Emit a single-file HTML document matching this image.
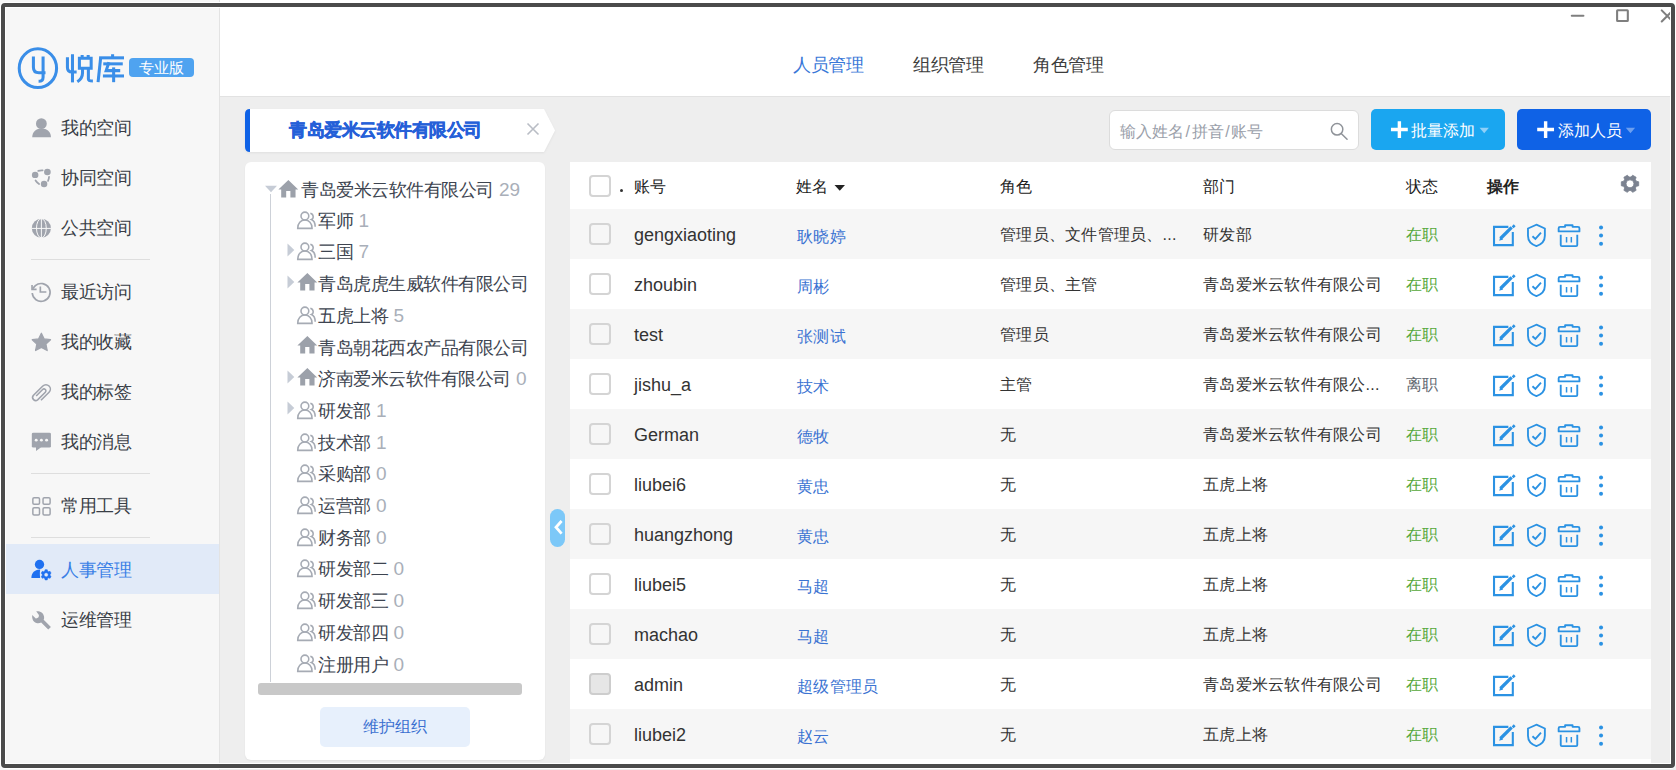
<!DOCTYPE html>
<html><head><meta charset="utf-8">
<style>
*{box-sizing:border-box;margin:0;padding:0}
html,body{width:1676px;height:770px;overflow:hidden;background:#f4f4f4;font-family:"Liberation Sans",sans-serif;}
.a{position:absolute;white-space:nowrap}
#side{position:absolute;left:0;top:0;width:220px;height:770px;background:#f7f7f7;border-right:1px solid #e3e3e3}
#head{position:absolute;left:220px;top:0;width:1456px;height:97px;background:#fff;border-bottom:1px solid #e2e2e2}
#main{position:absolute;left:220px;top:97px;width:1456px;height:673px;background:#eeeeee}
.nav{position:absolute;left:61px;font-size:18px;letter-spacing:-0.4px;color:#393e46;line-height:24px;white-space:nowrap}
.dv{position:absolute;left:31px;width:119px;height:1px;background:#dedede}
.ic{position:absolute;left:26px;width:32px;height:32px}
.tab{position:absolute;top:53px;font-size:18px;letter-spacing:-0.5px;line-height:24px;color:#3d3d3d;white-space:nowrap}
</style></head><body>
<div id="side"></div>
<div id="head"></div>
<div id="main"></div>

<!-- logo -->
<svg class="a" style="left:14px;top:44px" width="116" height="48" viewBox="0 0 1676 694" fill="none" stroke="#3a8ee8" stroke-width="44" stroke-linecap="butt">
<ellipse cx="345" cy="350" rx="270" ry="280"/>
<path d="M280,180 V335 Q280,415 360,415 H455"/>
<path d="M420,180 V480 Q420,540 355,540"/>
<path d="M845,148 V555"/>
<path d="M772,190 V340 Q772,405 840,405 H905"/>
<path d="M985,158 V205 M1072,158 V205"/>
<path d="M945,205 H1115 V350 H945 Z"/>
<path d="M990,350 V420 Q990,500 915,545"/>
<path d="M1075,350 V505 Q1075,535 1140,535"/>
<path d="M1425,148 V200"/>
<path d="M1230,200 H1590"/>
<path d="M1252,200 L1215,552"/>
<path d="M1290,287 H1572"/>
<path d="M1372,265 L1332,385 H1535"/>
<path d="M1285,462 H1590"/>
<path d="M1440,338 V552"/>
</svg>
<div class="a" style="left:129px;top:58px;width:65px;height:19px;background:#4fa3f0;border-radius:4px;color:#fff;font-size:15px;line-height:19px;text-align:center">专业版</div>

<!-- nav -->
<svg class="ic" style="top:112px" viewBox="0 0 770 770" fill="#a0a4ad"><circle cx="370" cy="280" r="130"/><path d="M150,605 C150,480 250,400 375,400 C500,400 600,480 600,605 Z"/></svg>
<div class="nav" style="top:116px">我的空间</div>
<svg class="ic" style="top:162px" viewBox="0 0 770 770" fill="#a0a4ad"><circle cx="220" cy="310" r="78"/><circle cx="515" cy="240" r="80"/><circle cx="435" cy="530" r="78"/><g fill="none" stroke="#a0a4ad" stroke-width="42" stroke-linecap="round"><path d="M295,215 Q350,195 400,200"/><path d="M555,360 Q550,410 530,455"/><path d="M230,445 Q265,500 315,530"/></g></svg>
<div class="nav" style="top:166px">协同空间</div>
<svg class="ic" style="top:212px" viewBox="0 0 770 770"><circle cx="370" cy="390" r="230" fill="#a0a4ad"/><g fill="none" stroke="#f7f7f7" stroke-width="24"><path d="M130,395 H610 M370,150 V630"/><ellipse cx="370" cy="390" rx="118" ry="232"/></g></svg>
<div class="nav" style="top:216px">公共空间</div>
<div class="dv" style="top:259px"></div>
<svg class="ic" style="top:276px" viewBox="0 0 770 770" fill="none" stroke="#a0a4ad" stroke-width="40"><path d="M160,305 L225,232 A215,215 0 1 1 150,410"/><path d="M145,215 V320 H255" stroke-linejoin="miter"/><path d="M345,250 V385 H490"/></svg>
<div class="nav" style="top:280px">最近访问</div>
<svg class="ic" style="top:326px" viewBox="0 0 770 770" fill="#a0a4ad" stroke="#a0a4ad" stroke-width="30" stroke-linejoin="round"><path d="M370,175 L435,310 L590,330 L480,435 L510,590 L370,515 L230,590 L260,435 L150,330 L305,310 Z"/></svg>
<div class="nav" style="top:330px">我的收藏</div>
<svg class="ic" style="top:376px" viewBox="0 0 770 770" fill="none" stroke="#a0a4ad" stroke-width="38" stroke-linecap="butt"><path d="M360,585 L555,390 A105,105 0 0 0 405,240 L175,470 A75,75 0 0 0 280,575 L465,390 A45,45 0 0 0 400,325 L245,480"/></svg>
<div class="nav" style="top:380px">我的标签</div>
<svg class="ic" style="top:426px" viewBox="0 0 770 770" fill="#a0a4ad"><rect x="140" y="160" width="460" height="360" rx="35"/><path d="M240,500 V600 L365,510 Z"/><g fill="#f7f7f7"><circle cx="245" cy="340" r="35"/><circle cx="370" cy="340" r="35"/><circle cx="495" cy="340" r="35"/></g></svg>
<div class="nav" style="top:430px">我的消息</div>
<div class="dv" style="top:473px"></div>
<svg class="ic" style="top:490px" viewBox="0 0 770 770" fill="none" stroke="#a0a4ad" stroke-width="36"><rect x="165" y="185" width="160" height="160" rx="30"/><rect x="410" y="185" width="170" height="160" rx="30"/><rect x="165" y="430" width="160" height="170" rx="30"/><rect x="410" y="430" width="170" height="170" rx="30"/></svg>
<div class="nav" style="top:494px">常用工具</div>
<div class="dv" style="top:537px"></div>
<div class="a" style="left:0px;top:544px;width:219px;height:50px;background:#e1eaf8"></div>
<svg class="ic" style="top:553px" viewBox="0 0 770 770" fill="#1f70f0"><circle cx="325" cy="275" r="112"/><path d="M130,600 C130,480 215,405 320,400 L345,400 C335,430 330,470 340,600 Z"/><path fill-rule="evenodd" stroke="#1f70f0" stroke-width="14" stroke-linejoin="round" d="M579,541 L604,564 L578,609 L546,598 L517,614 L511,647 L459,647 L453,614 L424,598 L392,609 L366,564 L391,541 L391,509 L366,486 L392,441 L424,452 L453,436 L459,403 L511,403 L517,436 L546,452 L578,441 L604,486 L579,509 Z M485,475 a50,50 0 1 0 0.1,0 Z"/></svg>
<div class="nav" style="top:558px;color:#3a7fe6">人事管理</div>
<svg class="ic" style="top:603px" viewBox="0 0 770 770" fill="#a0a4ad"><path d="M245,200 C330,190 420,230 435,330 C440,360 435,385 425,405 L600,575 L535,640 L365,470 C330,485 290,490 250,480 C170,455 140,380 150,290 L235,370 C280,375 320,340 310,290 Z"/></svg>
<div class="nav" style="top:608px">运维管理</div>


<div class="tab" style="left:793px;color:#3a78d8">人员管理</div>
<div class="tab" style="left:913px">组织管理</div>
<div class="tab" style="left:1033px">角色管理</div>
<svg class="a" style="left:1560px;top:0px" width="116" height="40" viewBox="0 0 1676 578" fill="none" stroke="#7f7f7f" stroke-width="30" stroke-linecap="round">
<path d="M170,228 H338"/>
<rect x="825" y="148" width="155" height="155" rx="8"/>
<path d="M1470,150 L1640,320 M1470,310 L1640,140"/>
</svg>


<svg class="a" style="left:240px;top:104px;filter:drop-shadow(0 1px 1px rgba(0,0,0,0.06))" width="320" height="54" viewBox="240 104 320 54">
<path d="M250,109 H544 L555,130.5 L544,152 H250 Z" fill="#fff"/>
<path d="M250,109 V152 Q245,152 245,147 V114 Q245,109 250,109 Z" fill="#0f62e6"/>
<path d="M527.5,123.5 L538.5,134.5 M538.5,123.5 L527.5,134.5" stroke="#b9bdc5" stroke-width="1.6" fill="none"/>
</svg>
<div class="a" style="left:289px;top:118px;font-size:18px;letter-spacing:-0.5px;line-height:24px;font-weight:900;color:#2560d8;-webkit-text-stroke:0.5px #2560d8">青岛爱米云软件有限公司</div>
<div class="a" style="left:245px;top:162px;width:300px;height:598px;background:#fff;border-radius:6px;box-shadow:0 1px 2px rgba(0,0,0,0.05)"></div>

<svg class="a" style="left:265px;top:185px" width="13" height="8" viewBox="0 0 13 8"><path d="M0,0.7 H12 L6,7.2 Z" fill="#c6ccd6"/></svg>
<div class="a" style="left:270px;top:194px;width:1px;height:488px;background:#cdd1d8"></div>
<svg class="a" style="left:260px;top:176.0px" width="40" height="24" viewBox="0 0 1283 770" fill="#9ca1aa"><path d="M910,130 L1225,430 H1140 V690 H975 V480 H840 V690 H680 V430 H590 Z"/></svg>
<div class="a tr" style="left:301px;top:178.0px">青岛爱米云软件有限公司 <span style="color:#a9afb9;font-size:19px;letter-spacing:0;margin-left:1px">29</span></div>
<svg class="a" style="left:284px;top:206.6px" width="40" height="24" viewBox="0 0 1283 770" fill="none" stroke="#a6abb4" stroke-width="50"><circle cx="670" cy="290" r="125"/><path d="M440,685 C440,520 540,420 670,420 C800,420 900,520 900,685 Z"/><path d="M845,200 C960,230 960,370 880,400 C975,440 1000,540 1000,630"/></svg>
<div class="a tr" style="left:318px;top:208.7px">军师 <span style="color:#a9afb9;font-size:19px;letter-spacing:0;margin-left:1px">1</span></div>
<svg class="a" style="left:284px;top:238.3px" width="40" height="24" viewBox="0 0 1283 770" fill="none" stroke="#a6abb4" stroke-width="50"><circle cx="670" cy="290" r="125"/><path d="M440,685 C440,520 540,420 670,420 C800,420 900,520 900,685 Z"/><path d="M845,200 C960,230 960,370 880,400 C975,440 1000,540 1000,630"/></svg>
<svg class="a" style="left:287px;top:242.9px" width="8" height="14" viewBox="0 0 8 14"><path d="M0.5,0.5 V13.5 L7.3,7 Z" fill="#c6ccd6"/></svg>
<div class="a tr" style="left:318px;top:240.4px">三国 <span style="color:#a9afb9;font-size:19px;letter-spacing:0;margin-left:1px">7</span></div>
<svg class="a" style="left:279px;top:268.8px" width="40" height="24" viewBox="0 0 1283 770" fill="#9ca1aa"><path d="M910,130 L1225,430 H1140 V690 H975 V480 H840 V690 H680 V430 H590 Z"/></svg>
<svg class="a" style="left:287px;top:274.6px" width="8" height="14" viewBox="0 0 8 14"><path d="M0.5,0.5 V13.5 L7.3,7 Z" fill="#c6ccd6"/></svg>
<div class="a tr" style="left:318px;top:272.1px">青岛虎虎生威软件有限公司</div>
<svg class="a" style="left:284px;top:301.7px" width="40" height="24" viewBox="0 0 1283 770" fill="none" stroke="#a6abb4" stroke-width="50"><circle cx="670" cy="290" r="125"/><path d="M440,685 C440,520 540,420 670,420 C800,420 900,520 900,685 Z"/><path d="M845,200 C960,230 960,370 880,400 C975,440 1000,540 1000,630"/></svg>
<div class="a tr" style="left:318px;top:303.8px">五虎上将 <span style="color:#a9afb9;font-size:19px;letter-spacing:0;margin-left:1px">5</span></div>
<svg class="a" style="left:279px;top:332.2px" width="40" height="24" viewBox="0 0 1283 770" fill="#9ca1aa"><path d="M910,130 L1225,430 H1140 V690 H975 V480 H840 V690 H680 V430 H590 Z"/></svg>
<div class="a tr" style="left:318px;top:335.5px">青岛朝花西农产品有限公司</div>
<svg class="a" style="left:279px;top:363.9px" width="40" height="24" viewBox="0 0 1283 770" fill="#9ca1aa"><path d="M910,130 L1225,430 H1140 V690 H975 V480 H840 V690 H680 V430 H590 Z"/></svg>
<svg class="a" style="left:287px;top:369.7px" width="8" height="14" viewBox="0 0 8 14"><path d="M0.5,0.5 V13.5 L7.3,7 Z" fill="#c6ccd6"/></svg>
<div class="a tr" style="left:318px;top:367.2px">济南爱米云软件有限公司 <span style="color:#a9afb9;font-size:19px;letter-spacing:0;margin-left:1px">0</span></div>
<svg class="a" style="left:284px;top:396.8px" width="40" height="24" viewBox="0 0 1283 770" fill="none" stroke="#a6abb4" stroke-width="50"><circle cx="670" cy="290" r="125"/><path d="M440,685 C440,520 540,420 670,420 C800,420 900,520 900,685 Z"/><path d="M845,200 C960,230 960,370 880,400 C975,440 1000,540 1000,630"/></svg>
<svg class="a" style="left:287px;top:401.4px" width="8" height="14" viewBox="0 0 8 14"><path d="M0.5,0.5 V13.5 L7.3,7 Z" fill="#c6ccd6"/></svg>
<div class="a tr" style="left:318px;top:398.9px">研发部 <span style="color:#a9afb9;font-size:19px;letter-spacing:0;margin-left:1px">1</span></div>
<svg class="a" style="left:284px;top:428.5px" width="40" height="24" viewBox="0 0 1283 770" fill="none" stroke="#a6abb4" stroke-width="50"><circle cx="670" cy="290" r="125"/><path d="M440,685 C440,520 540,420 670,420 C800,420 900,520 900,685 Z"/><path d="M845,200 C960,230 960,370 880,400 C975,440 1000,540 1000,630"/></svg>
<div class="a tr" style="left:318px;top:430.6px">技术部 <span style="color:#a9afb9;font-size:19px;letter-spacing:0;margin-left:1px">1</span></div>
<svg class="a" style="left:284px;top:460.2px" width="40" height="24" viewBox="0 0 1283 770" fill="none" stroke="#a6abb4" stroke-width="50"><circle cx="670" cy="290" r="125"/><path d="M440,685 C440,520 540,420 670,420 C800,420 900,520 900,685 Z"/><path d="M845,200 C960,230 960,370 880,400 C975,440 1000,540 1000,630"/></svg>
<div class="a tr" style="left:318px;top:462.3px">采购部 <span style="color:#a9afb9;font-size:19px;letter-spacing:0;margin-left:1px">0</span></div>
<svg class="a" style="left:284px;top:491.9px" width="40" height="24" viewBox="0 0 1283 770" fill="none" stroke="#a6abb4" stroke-width="50"><circle cx="670" cy="290" r="125"/><path d="M440,685 C440,520 540,420 670,420 C800,420 900,520 900,685 Z"/><path d="M845,200 C960,230 960,370 880,400 C975,440 1000,540 1000,630"/></svg>
<div class="a tr" style="left:318px;top:494.0px">运营部 <span style="color:#a9afb9;font-size:19px;letter-spacing:0;margin-left:1px">0</span></div>
<svg class="a" style="left:284px;top:523.6px" width="40" height="24" viewBox="0 0 1283 770" fill="none" stroke="#a6abb4" stroke-width="50"><circle cx="670" cy="290" r="125"/><path d="M440,685 C440,520 540,420 670,420 C800,420 900,520 900,685 Z"/><path d="M845,200 C960,230 960,370 880,400 C975,440 1000,540 1000,630"/></svg>
<div class="a tr" style="left:318px;top:525.7px">财务部 <span style="color:#a9afb9;font-size:19px;letter-spacing:0;margin-left:1px">0</span></div>
<svg class="a" style="left:284px;top:555.3px" width="40" height="24" viewBox="0 0 1283 770" fill="none" stroke="#a6abb4" stroke-width="50"><circle cx="670" cy="290" r="125"/><path d="M440,685 C440,520 540,420 670,420 C800,420 900,520 900,685 Z"/><path d="M845,200 C960,230 960,370 880,400 C975,440 1000,540 1000,630"/></svg>
<div class="a tr" style="left:318px;top:557.4px">研发部二 <span style="color:#a9afb9;font-size:19px;letter-spacing:0;margin-left:1px">0</span></div>
<svg class="a" style="left:284px;top:587.0px" width="40" height="24" viewBox="0 0 1283 770" fill="none" stroke="#a6abb4" stroke-width="50"><circle cx="670" cy="290" r="125"/><path d="M440,685 C440,520 540,420 670,420 C800,420 900,520 900,685 Z"/><path d="M845,200 C960,230 960,370 880,400 C975,440 1000,540 1000,630"/></svg>
<div class="a tr" style="left:318px;top:589.1px">研发部三 <span style="color:#a9afb9;font-size:19px;letter-spacing:0;margin-left:1px">0</span></div>
<svg class="a" style="left:284px;top:618.7px" width="40" height="24" viewBox="0 0 1283 770" fill="none" stroke="#a6abb4" stroke-width="50"><circle cx="670" cy="290" r="125"/><path d="M440,685 C440,520 540,420 670,420 C800,420 900,520 900,685 Z"/><path d="M845,200 C960,230 960,370 880,400 C975,440 1000,540 1000,630"/></svg>
<div class="a tr" style="left:318px;top:620.8px">研发部四 <span style="color:#a9afb9;font-size:19px;letter-spacing:0;margin-left:1px">0</span></div>
<svg class="a" style="left:284px;top:650.4px" width="40" height="24" viewBox="0 0 1283 770" fill="none" stroke="#a6abb4" stroke-width="50"><circle cx="670" cy="290" r="125"/><path d="M440,685 C440,520 540,420 670,420 C800,420 900,520 900,685 Z"/><path d="M845,200 C960,230 960,370 880,400 C975,440 1000,540 1000,630"/></svg>
<div class="a tr" style="left:318px;top:652.5px">注册用户 <span style="color:#a9afb9;font-size:19px;letter-spacing:0;margin-left:1px">0</span></div>

<div class="a" style="left:258px;top:683px;width:264px;height:12px;background:#c8c8c8;border-radius:3px"></div>
<div class="a" style="left:320px;top:707px;width:150px;height:40px;background:#e7f0fc;border-radius:5px;color:#3a6fd0;font-size:16px;line-height:40px;text-align:center">维护组织</div>
<div class="a" style="left:550px;top:509px;width:15px;height:38px;background:#7cc8f8;border-radius:8px"></div>
<svg class="a" style="left:550px;top:509px" width="15" height="38" viewBox="0 0 15 38"><path d="M11.6,12 L6,18.3 L11.6,24.6" fill="none" stroke="#fff" stroke-width="2.8"/></svg>


<div class="a" style="left:1109px;top:110px;width:250px;height:40px;background:#fff;border:1px solid #dcdcdc;border-radius:6px"></div>
<div class="a" style="left:1120px;top:120px;font-size:16px;letter-spacing:0;line-height:24px;color:#9aa0aa">输入姓名<span style="margin:0 1.6px">/</span>拼音<span style="margin:0 1.6px">/</span>账号</div>
<svg class="a" style="left:1324px;top:116px" width="32" height="32" viewBox="0 0 770 770" fill="none" stroke="#8f9399" stroke-width="36"><circle cx="315" cy="320" r="138"/><path d="M420,425 L555,560" stroke-linecap="round"/></svg>
<div class="a" style="left:1371px;top:109px;width:134px;height:41px;background:#1aa6f0;border-radius:5px"></div>
<div class="a" style="left:1517px;top:109px;width:134px;height:41px;background:#0f62e6;border-radius:5px"></div>
<svg class="a" style="left:1360px;top:100px" width="300" height="60" viewBox="0 0 1676 335">
<g stroke="#fff" stroke-width="19"><path d="M220,118 V212 M173,165 H267"/><path d="M1037,118 V212 M990,165 H1084"/></g>
<path d="M668,155 H720 L694,185 Z" fill="#8fd0f8"/>
<path d="M1485,155 H1537 L1511,185 Z" fill="#6b9ff0"/>
</svg>
<div class="a" style="left:1411px;top:119px;font-size:16px;line-height:24px;color:#fff">批量添加</div>
<div class="a" style="left:1558px;top:119px;font-size:16px;line-height:24px;color:#fff">添加人员</div>

<div class="a" style="left:570px;top:162px;width:1081px;height:601px;background:#fff"></div>

<div class="a cb" style="left:589px;top:175px"></div>
<div class="a" style="left:620px;top:189px;width:3px;height:3px;background:#333;border-radius:50%"></div>
<div class="a th" style="left:634px">账号</div>
<div class="a th" style="left:796px">姓名</div>
<svg class="a" style="left:834px;top:184px" width="12" height="8" viewBox="0 0 12 8"><path d="M0.5,1 H11 L5.75,6.8 Z" fill="#222"/></svg>
<div class="a th" style="left:1000px">角色</div>
<div class="a th" style="left:1203px">部门</div>
<div class="a th" style="left:1406px">状态</div>
<div class="a th" style="left:1487px;font-weight:bold">操作</div>
<svg class="a" style="left:1614px;top:168px" width="32" height="32" viewBox="0 0 770 770"><path fill="#7b8290" fill-rule="evenodd" d="M538,318 L594,332 L594,428 L538,442 L515,482 L532,537 L448,586 L408,543 L362,543 L322,586 L238,537 L255,482 L232,442 L176,428 L176,332 L232,318 L255,278 L238,223 L322,174 L362,217 L408,217 L448,174 L532,223 L515,278 Z M385,285 a95,95 0 1 0 0.1,0 Z" stroke="#7b8290" stroke-width="20" stroke-linejoin="round"/></svg>

<div class="a" style="left:570px;top:209px;width:1081px;height:50px;background:#f6f6f6"></div>
<div class="a cb" style="left:589px;top:223px"></div>
<div class="a td acc" style="left:634px;top:223px">gengxiaoting</div>
<div class="a td" style="left:797px;top:225px;color:#3b73d2">耿晓婷</div>
<div class="a td" style="left:1000px;top:223px">管理员、文件管理员、...</div>
<div class="a td" style="left:1203px;top:223px">研发部</div>
<div class="a td" style="left:1406px;top:223px;color:#55a83a">在职</div>
<svg class="a" style="left:1488px;top:220px" width="128" height="32" viewBox="0 0 3080 770" fill="none" stroke="#2b92e3">
<path d="M490,165 H145 V605 H597 V290" stroke-width="50"/>
<path d="M300,445 L570,175" stroke-width="78"/><path d="M270,500 L295,405 L365,470 Z" fill="#2b92e3" stroke="none"/>
<path d="M595,130 L640,175" stroke-width="70"/>
<path d="M1165,112 L1368,205 V380 C1368,500 1280,590 1165,628 C1050,590 962,500 962,380 V205 Z" stroke-width="45"/>
<path d="M1070,390 L1140,455 L1275,305" stroke-width="45"/>
<g transform="translate(1540,0)">
<path d="M160,275 V200 Q160,165 195,165 H315 V125 H495 V165 H625 Q660,165 660,200 V275 Z" stroke-width="45" stroke-linejoin="round"/>
<path d="M210,355 V600 Q210,628 240,628 H580 Q608,628 608,600 V355" stroke-width="45"/>
<path d="M350,410 V540 M465,410 V540" stroke-width="36"/>
<g fill="#2b92e3" stroke="none"><circle cx="1180" cy="180" r="48"/><circle cx="1180" cy="375" r="48"/><circle cx="1180" cy="570" r="48"/></g>
</g></svg>
<div class="a cb" style="left:589px;top:273px"></div>
<div class="a td acc" style="left:634px;top:273px">zhoubin</div>
<div class="a td" style="left:797px;top:275px;color:#3b73d2">周彬</div>
<div class="a td" style="left:1000px;top:273px">管理员、主管</div>
<div class="a td" style="left:1203px;top:273px">青岛爱米云软件有限公司</div>
<div class="a td" style="left:1406px;top:273px;color:#55a83a">在职</div>
<svg class="a" style="left:1488px;top:270px" width="128" height="32" viewBox="0 0 3080 770" fill="none" stroke="#2b92e3">
<path d="M490,165 H145 V605 H597 V290" stroke-width="50"/>
<path d="M300,445 L570,175" stroke-width="78"/><path d="M270,500 L295,405 L365,470 Z" fill="#2b92e3" stroke="none"/>
<path d="M595,130 L640,175" stroke-width="70"/>
<path d="M1165,112 L1368,205 V380 C1368,500 1280,590 1165,628 C1050,590 962,500 962,380 V205 Z" stroke-width="45"/>
<path d="M1070,390 L1140,455 L1275,305" stroke-width="45"/>
<g transform="translate(1540,0)">
<path d="M160,275 V200 Q160,165 195,165 H315 V125 H495 V165 H625 Q660,165 660,200 V275 Z" stroke-width="45" stroke-linejoin="round"/>
<path d="M210,355 V600 Q210,628 240,628 H580 Q608,628 608,600 V355" stroke-width="45"/>
<path d="M350,410 V540 M465,410 V540" stroke-width="36"/>
<g fill="#2b92e3" stroke="none"><circle cx="1180" cy="180" r="48"/><circle cx="1180" cy="375" r="48"/><circle cx="1180" cy="570" r="48"/></g>
</g></svg>
<div class="a" style="left:570px;top:309px;width:1081px;height:50px;background:#f6f6f6"></div>
<div class="a cb" style="left:589px;top:323px"></div>
<div class="a td acc" style="left:634px;top:323px">test</div>
<div class="a td" style="left:797px;top:325px;color:#3b73d2">张测试</div>
<div class="a td" style="left:1000px;top:323px">管理员</div>
<div class="a td" style="left:1203px;top:323px">青岛爱米云软件有限公司</div>
<div class="a td" style="left:1406px;top:323px;color:#55a83a">在职</div>
<svg class="a" style="left:1488px;top:320px" width="128" height="32" viewBox="0 0 3080 770" fill="none" stroke="#2b92e3">
<path d="M490,165 H145 V605 H597 V290" stroke-width="50"/>
<path d="M300,445 L570,175" stroke-width="78"/><path d="M270,500 L295,405 L365,470 Z" fill="#2b92e3" stroke="none"/>
<path d="M595,130 L640,175" stroke-width="70"/>
<path d="M1165,112 L1368,205 V380 C1368,500 1280,590 1165,628 C1050,590 962,500 962,380 V205 Z" stroke-width="45"/>
<path d="M1070,390 L1140,455 L1275,305" stroke-width="45"/>
<g transform="translate(1540,0)">
<path d="M160,275 V200 Q160,165 195,165 H315 V125 H495 V165 H625 Q660,165 660,200 V275 Z" stroke-width="45" stroke-linejoin="round"/>
<path d="M210,355 V600 Q210,628 240,628 H580 Q608,628 608,600 V355" stroke-width="45"/>
<path d="M350,410 V540 M465,410 V540" stroke-width="36"/>
<g fill="#2b92e3" stroke="none"><circle cx="1180" cy="180" r="48"/><circle cx="1180" cy="375" r="48"/><circle cx="1180" cy="570" r="48"/></g>
</g></svg>
<div class="a cb" style="left:589px;top:373px"></div>
<div class="a td acc" style="left:634px;top:373px">jishu_a</div>
<div class="a td" style="left:797px;top:375px;color:#3b73d2">技术</div>
<div class="a td" style="left:1000px;top:373px">主管</div>
<div class="a td" style="left:1203px;top:373px">青岛爱米云软件有限公...</div>
<div class="a td" style="left:1406px;top:373px;color:#626870">离职</div>
<svg class="a" style="left:1488px;top:370px" width="128" height="32" viewBox="0 0 3080 770" fill="none" stroke="#2b92e3">
<path d="M490,165 H145 V605 H597 V290" stroke-width="50"/>
<path d="M300,445 L570,175" stroke-width="78"/><path d="M270,500 L295,405 L365,470 Z" fill="#2b92e3" stroke="none"/>
<path d="M595,130 L640,175" stroke-width="70"/>
<path d="M1165,112 L1368,205 V380 C1368,500 1280,590 1165,628 C1050,590 962,500 962,380 V205 Z" stroke-width="45"/>
<path d="M1070,390 L1140,455 L1275,305" stroke-width="45"/>
<g transform="translate(1540,0)">
<path d="M160,275 V200 Q160,165 195,165 H315 V125 H495 V165 H625 Q660,165 660,200 V275 Z" stroke-width="45" stroke-linejoin="round"/>
<path d="M210,355 V600 Q210,628 240,628 H580 Q608,628 608,600 V355" stroke-width="45"/>
<path d="M350,410 V540 M465,410 V540" stroke-width="36"/>
<g fill="#2b92e3" stroke="none"><circle cx="1180" cy="180" r="48"/><circle cx="1180" cy="375" r="48"/><circle cx="1180" cy="570" r="48"/></g>
</g></svg>
<div class="a" style="left:570px;top:409px;width:1081px;height:50px;background:#f6f6f6"></div>
<div class="a cb" style="left:589px;top:423px"></div>
<div class="a td acc" style="left:634px;top:423px">German</div>
<div class="a td" style="left:797px;top:425px;color:#3b73d2">德牧</div>
<div class="a td" style="left:1000px;top:423px">无</div>
<div class="a td" style="left:1203px;top:423px">青岛爱米云软件有限公司</div>
<div class="a td" style="left:1406px;top:423px;color:#55a83a">在职</div>
<svg class="a" style="left:1488px;top:420px" width="128" height="32" viewBox="0 0 3080 770" fill="none" stroke="#2b92e3">
<path d="M490,165 H145 V605 H597 V290" stroke-width="50"/>
<path d="M300,445 L570,175" stroke-width="78"/><path d="M270,500 L295,405 L365,470 Z" fill="#2b92e3" stroke="none"/>
<path d="M595,130 L640,175" stroke-width="70"/>
<path d="M1165,112 L1368,205 V380 C1368,500 1280,590 1165,628 C1050,590 962,500 962,380 V205 Z" stroke-width="45"/>
<path d="M1070,390 L1140,455 L1275,305" stroke-width="45"/>
<g transform="translate(1540,0)">
<path d="M160,275 V200 Q160,165 195,165 H315 V125 H495 V165 H625 Q660,165 660,200 V275 Z" stroke-width="45" stroke-linejoin="round"/>
<path d="M210,355 V600 Q210,628 240,628 H580 Q608,628 608,600 V355" stroke-width="45"/>
<path d="M350,410 V540 M465,410 V540" stroke-width="36"/>
<g fill="#2b92e3" stroke="none"><circle cx="1180" cy="180" r="48"/><circle cx="1180" cy="375" r="48"/><circle cx="1180" cy="570" r="48"/></g>
</g></svg>
<div class="a cb" style="left:589px;top:473px"></div>
<div class="a td acc" style="left:634px;top:473px">liubei6</div>
<div class="a td" style="left:797px;top:475px;color:#3b73d2">黄忠</div>
<div class="a td" style="left:1000px;top:473px">无</div>
<div class="a td" style="left:1203px;top:473px">五虎上将</div>
<div class="a td" style="left:1406px;top:473px;color:#55a83a">在职</div>
<svg class="a" style="left:1488px;top:470px" width="128" height="32" viewBox="0 0 3080 770" fill="none" stroke="#2b92e3">
<path d="M490,165 H145 V605 H597 V290" stroke-width="50"/>
<path d="M300,445 L570,175" stroke-width="78"/><path d="M270,500 L295,405 L365,470 Z" fill="#2b92e3" stroke="none"/>
<path d="M595,130 L640,175" stroke-width="70"/>
<path d="M1165,112 L1368,205 V380 C1368,500 1280,590 1165,628 C1050,590 962,500 962,380 V205 Z" stroke-width="45"/>
<path d="M1070,390 L1140,455 L1275,305" stroke-width="45"/>
<g transform="translate(1540,0)">
<path d="M160,275 V200 Q160,165 195,165 H315 V125 H495 V165 H625 Q660,165 660,200 V275 Z" stroke-width="45" stroke-linejoin="round"/>
<path d="M210,355 V600 Q210,628 240,628 H580 Q608,628 608,600 V355" stroke-width="45"/>
<path d="M350,410 V540 M465,410 V540" stroke-width="36"/>
<g fill="#2b92e3" stroke="none"><circle cx="1180" cy="180" r="48"/><circle cx="1180" cy="375" r="48"/><circle cx="1180" cy="570" r="48"/></g>
</g></svg>
<div class="a" style="left:570px;top:509px;width:1081px;height:50px;background:#f6f6f6"></div>
<div class="a cb" style="left:589px;top:523px"></div>
<div class="a td acc" style="left:634px;top:523px">huangzhong</div>
<div class="a td" style="left:797px;top:525px;color:#3b73d2">黄忠</div>
<div class="a td" style="left:1000px;top:523px">无</div>
<div class="a td" style="left:1203px;top:523px">五虎上将</div>
<div class="a td" style="left:1406px;top:523px;color:#55a83a">在职</div>
<svg class="a" style="left:1488px;top:520px" width="128" height="32" viewBox="0 0 3080 770" fill="none" stroke="#2b92e3">
<path d="M490,165 H145 V605 H597 V290" stroke-width="50"/>
<path d="M300,445 L570,175" stroke-width="78"/><path d="M270,500 L295,405 L365,470 Z" fill="#2b92e3" stroke="none"/>
<path d="M595,130 L640,175" stroke-width="70"/>
<path d="M1165,112 L1368,205 V380 C1368,500 1280,590 1165,628 C1050,590 962,500 962,380 V205 Z" stroke-width="45"/>
<path d="M1070,390 L1140,455 L1275,305" stroke-width="45"/>
<g transform="translate(1540,0)">
<path d="M160,275 V200 Q160,165 195,165 H315 V125 H495 V165 H625 Q660,165 660,200 V275 Z" stroke-width="45" stroke-linejoin="round"/>
<path d="M210,355 V600 Q210,628 240,628 H580 Q608,628 608,600 V355" stroke-width="45"/>
<path d="M350,410 V540 M465,410 V540" stroke-width="36"/>
<g fill="#2b92e3" stroke="none"><circle cx="1180" cy="180" r="48"/><circle cx="1180" cy="375" r="48"/><circle cx="1180" cy="570" r="48"/></g>
</g></svg>
<div class="a cb" style="left:589px;top:573px"></div>
<div class="a td acc" style="left:634px;top:573px">liubei5</div>
<div class="a td" style="left:797px;top:575px;color:#3b73d2">马超</div>
<div class="a td" style="left:1000px;top:573px">无</div>
<div class="a td" style="left:1203px;top:573px">五虎上将</div>
<div class="a td" style="left:1406px;top:573px;color:#55a83a">在职</div>
<svg class="a" style="left:1488px;top:570px" width="128" height="32" viewBox="0 0 3080 770" fill="none" stroke="#2b92e3">
<path d="M490,165 H145 V605 H597 V290" stroke-width="50"/>
<path d="M300,445 L570,175" stroke-width="78"/><path d="M270,500 L295,405 L365,470 Z" fill="#2b92e3" stroke="none"/>
<path d="M595,130 L640,175" stroke-width="70"/>
<path d="M1165,112 L1368,205 V380 C1368,500 1280,590 1165,628 C1050,590 962,500 962,380 V205 Z" stroke-width="45"/>
<path d="M1070,390 L1140,455 L1275,305" stroke-width="45"/>
<g transform="translate(1540,0)">
<path d="M160,275 V200 Q160,165 195,165 H315 V125 H495 V165 H625 Q660,165 660,200 V275 Z" stroke-width="45" stroke-linejoin="round"/>
<path d="M210,355 V600 Q210,628 240,628 H580 Q608,628 608,600 V355" stroke-width="45"/>
<path d="M350,410 V540 M465,410 V540" stroke-width="36"/>
<g fill="#2b92e3" stroke="none"><circle cx="1180" cy="180" r="48"/><circle cx="1180" cy="375" r="48"/><circle cx="1180" cy="570" r="48"/></g>
</g></svg>
<div class="a" style="left:570px;top:609px;width:1081px;height:50px;background:#f6f6f6"></div>
<div class="a cb" style="left:589px;top:623px"></div>
<div class="a td acc" style="left:634px;top:623px">machao</div>
<div class="a td" style="left:797px;top:625px;color:#3b73d2">马超</div>
<div class="a td" style="left:1000px;top:623px">无</div>
<div class="a td" style="left:1203px;top:623px">五虎上将</div>
<div class="a td" style="left:1406px;top:623px;color:#55a83a">在职</div>
<svg class="a" style="left:1488px;top:620px" width="128" height="32" viewBox="0 0 3080 770" fill="none" stroke="#2b92e3">
<path d="M490,165 H145 V605 H597 V290" stroke-width="50"/>
<path d="M300,445 L570,175" stroke-width="78"/><path d="M270,500 L295,405 L365,470 Z" fill="#2b92e3" stroke="none"/>
<path d="M595,130 L640,175" stroke-width="70"/>
<path d="M1165,112 L1368,205 V380 C1368,500 1280,590 1165,628 C1050,590 962,500 962,380 V205 Z" stroke-width="45"/>
<path d="M1070,390 L1140,455 L1275,305" stroke-width="45"/>
<g transform="translate(1540,0)">
<path d="M160,275 V200 Q160,165 195,165 H315 V125 H495 V165 H625 Q660,165 660,200 V275 Z" stroke-width="45" stroke-linejoin="round"/>
<path d="M210,355 V600 Q210,628 240,628 H580 Q608,628 608,600 V355" stroke-width="45"/>
<path d="M350,410 V540 M465,410 V540" stroke-width="36"/>
<g fill="#2b92e3" stroke="none"><circle cx="1180" cy="180" r="48"/><circle cx="1180" cy="375" r="48"/><circle cx="1180" cy="570" r="48"/></g>
</g></svg>
<div class="a cb dis" style="left:589px;top:673px"></div>
<div class="a td acc" style="left:634px;top:673px">admin</div>
<div class="a td" style="left:797px;top:675px;color:#3b73d2">超级管理员</div>
<div class="a td" style="left:1000px;top:673px">无</div>
<div class="a td" style="left:1203px;top:673px">青岛爱米云软件有限公司</div>
<div class="a td" style="left:1406px;top:673px;color:#55a83a">在职</div>
<svg class="a" style="left:1488px;top:670px" width="128" height="32" viewBox="0 0 3080 770" fill="none" stroke="#2b92e3">
<path d="M490,165 H145 V605 H597 V290" stroke-width="50"/>
<path d="M300,445 L570,175" stroke-width="78"/><path d="M270,500 L295,405 L365,470 Z" fill="#2b92e3" stroke="none"/>
<path d="M595,130 L640,175" stroke-width="70"/></svg>
<div class="a" style="left:570px;top:709px;width:1081px;height:50px;background:#f6f6f6"></div>
<div class="a cb" style="left:589px;top:723px"></div>
<div class="a td acc" style="left:634px;top:723px">liubei2</div>
<div class="a td" style="left:797px;top:725px;color:#3b73d2">赵云</div>
<div class="a td" style="left:1000px;top:723px">无</div>
<div class="a td" style="left:1203px;top:723px">五虎上将</div>
<div class="a td" style="left:1406px;top:723px;color:#55a83a">在职</div>
<svg class="a" style="left:1488px;top:720px" width="128" height="32" viewBox="0 0 3080 770" fill="none" stroke="#2b92e3">
<path d="M490,165 H145 V605 H597 V290" stroke-width="50"/>
<path d="M300,445 L570,175" stroke-width="78"/><path d="M270,500 L295,405 L365,470 Z" fill="#2b92e3" stroke="none"/>
<path d="M595,130 L640,175" stroke-width="70"/>
<path d="M1165,112 L1368,205 V380 C1368,500 1280,590 1165,628 C1050,590 962,500 962,380 V205 Z" stroke-width="45"/>
<path d="M1070,390 L1140,455 L1275,305" stroke-width="45"/>
<g transform="translate(1540,0)">
<path d="M160,275 V200 Q160,165 195,165 H315 V125 H495 V165 H625 Q660,165 660,200 V275 Z" stroke-width="45" stroke-linejoin="round"/>
<path d="M210,355 V600 Q210,628 240,628 H580 Q608,628 608,600 V355" stroke-width="45"/>
<path d="M350,410 V540 M465,410 V540" stroke-width="36"/>
<g fill="#2b92e3" stroke="none"><circle cx="1180" cy="180" r="48"/><circle cx="1180" cy="375" r="48"/><circle cx="1180" cy="570" r="48"/></g>
</g></svg>

<style>
.tr{font-size:18px;letter-spacing:-0.5px;line-height:24px;color:#3d4450}
.th{top:175px;font-size:16px;letter-spacing:0.25px;line-height:24px;color:#222}
.td{font-size:16px;letter-spacing:0.25px;line-height:24px;color:#333}
.acc{font-size:18px;letter-spacing:0}
.cb{width:22px;height:22px;border:2px solid #d4d4d4;border-radius:4px;background:transparent}
.cb.dis{background:#e6e6e6;border-color:#cdcdcd}
#frameov{position:absolute;left:1px;top:3px;width:1674px;height:765px;border:4px solid #4b4b4b;border-radius:4px;box-shadow:0 0 0 1px rgba(255,255,255,0.95),inset 0 0 0 1px rgba(255,255,255,0.95);pointer-events:none}
</style>
<div id="frameov"></div>
</body></html>
